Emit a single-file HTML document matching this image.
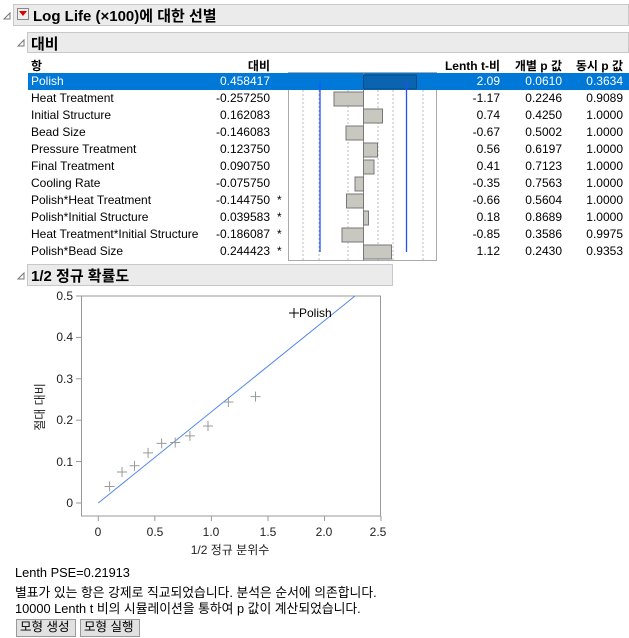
<!DOCTYPE html>
<html><head><meta charset="utf-8"><style>
body{margin:0;width:629px;height:638px;background:#fff;font-family:"Liberation Sans","Noto Sans CJK KR",sans-serif;font-size:12px;color:#000;position:relative;overflow:hidden}
.a{position:absolute;white-space:nowrap}
.hdr{position:absolute;background:#ebebeb;border:1px solid #c8c8c8;box-sizing:border-box}
.r{text-align:right}
.b{font-weight:bold}
.btn{position:absolute;top:619px;height:18px;background:#e1e1e1;border:1px solid #999;box-sizing:border-box;font-size:12.5px;line-height:15px;padding:0 3px}
.ft{font-size:12.8px}
</style></head><body>
<svg class="a" style="left:0;top:0" width="629" height="300">
<path d="M4 19 L10 13 L10 19Z" fill="none" stroke="#777"/>
<path d="M18 46 L24 40 L24 46Z" fill="none" stroke="#777"/>
<path d="M18 279 L24 273 L24 279Z" fill="none" stroke="#777"/>
</svg>
<div class="hdr" style="left:13px;top:4px;width:616px;height:22px"></div>
<div class="a" style="left:17px;top:8px;width:12px;height:12px;border:1px solid #888;background:#eee;box-sizing:border-box"></div>
<svg class="a" style="left:19px;top:11px" width="8" height="6"><path d="M0 0H8L4 5Z" fill="#d00"/></svg>
<div class="a" style="left:33px;top:5px;font-size:15px;font-weight:bold">Log Life (×100)에 대한 선별</div>
<div class="hdr" style="left:27px;top:32px;width:602px;height:21px"></div>
<div class="a" style="left:31px;top:33px;font-size:15px;font-weight:bold">대비</div>
<div class="a b" style="left:31px;top:57px">항</div>
<div class="a r b" style="left:200px;width:70px;top:57px">대비</div>
<div class="a r b" style="left:420px;width:80px;top:57px">Lenth t-비</div>
<div class="a r b" style="left:500px;width:62px;top:57px">개별 p 값</div>
<div class="a r b" style="left:562px;width:61px;top:57px">동시 p 값</div>
<div class="a" style="left:28px;top:73px;width:601px;height:17px;background:#0078d7"></div>
<div class="a" style="left:288px;top:72px;width:149px;height:189px;border:1px solid #aaa;box-sizing:border-box"></div>
<svg class="a" style="left:288px;top:73px" width="150" height="188">
<rect x="0" y="0" width="149" height="17" fill="#0078d7"/>
<g stroke="#bbb" stroke-dasharray="2,2"><line x1="15" y1="17" x2="15" y2="188"/><line x1="31" y1="17" x2="31" y2="188"/><line x1="60" y1="17" x2="60" y2="188"/><line x1="90" y1="17" x2="90" y2="188"/><line x1="105" y1="17" x2="105" y2="188"/><line x1="135" y1="17" x2="135" y2="188"/></g>
<line x1="75.5" y1="0" x2="75.5" y2="188" stroke="#888"/>
<g fill="#c8c8c0" stroke="#777">
<rect x="75.5" y="2" width="53" height="14" fill="#0a64b0" stroke="#0a4a80"/>
<rect x="46" y="19" width="29.5" height="14"/>
<rect x="75.5" y="36" width="19" height="14"/>
<rect x="58" y="53" width="17.5" height="14"/>
<rect x="75.5" y="70" width="14" height="14"/>
<rect x="75.5" y="87" width="10.5" height="14"/>
<rect x="67" y="104" width="8.5" height="14"/>
<rect x="58.5" y="121" width="17" height="14"/>
<rect x="75.5" y="138" width="5" height="14"/>
<rect x="54" y="155" width="21.5" height="14"/>
<rect x="75.5" y="172" width="28" height="14"/>
</g>
<line x1="32" y1="9" x2="32" y2="179" stroke="#2050ff" stroke-width="1.3"/>
<line x1="118.5" y1="9" x2="118.5" y2="179" stroke="#2050ff" stroke-width="1.3"/>
</svg>
<div id="rows"></div>
<script>
var d=[["Polish","0.458417","","2.09","0.0610","0.3634"],["Heat Treatment","-0.257250","","-1.17","0.2246","0.9089"],["Initial Structure","0.162083","","0.74","0.4250","1.0000"],["Bead Size","-0.146083","","-0.67","0.5002","1.0000"],["Pressure Treatment","0.123750","","0.56","0.6197","1.0000"],["Final Treatment","0.090750","","0.41","0.7123","1.0000"],["Cooling Rate","-0.075750","","-0.35","0.7563","1.0000"],["Polish*Heat Treatment","-0.144750","*","-0.66","0.5604","1.0000"],["Polish*Initial Structure","0.039583","*","0.18","0.8689","1.0000"],["Heat Treatment*Initial Structure","-0.186087","*","-0.85","0.3586","0.9975"],["Polish*Bead Size","0.244423","*","1.12","0.2430","0.9353"]];
var h="";d.forEach(function(r,i){var t=74+i*17,c=i==0?"color:#fff;":"";
h+='<div class="a" style="'+c+'left:31px;top:'+t+'px">'+r[0]+'</div><div class="a r" style="'+c+'left:180px;width:90px;top:'+t+'px">'+r[1]+'</div><div class="a" style="left:277px;top:'+t+'px">'+r[2]+'</div><div class="a r" style="'+c+'left:440px;width:60px;top:'+t+'px">'+r[3]+'</div><div class="a r" style="'+c+'left:500px;width:62px;top:'+t+'px">'+r[4]+'</div><div class="a r" style="'+c+'left:562px;width:61px;top:'+t+'px">'+r[5]+'</div>';});
document.getElementById("rows").innerHTML=h;
</script>
<div class="hdr" style="left:27px;top:264px;width:366px;height:22px"></div>
<div class="a" style="left:31px;top:265px;font-size:15px;font-weight:bold">1/2 정규 확률도</div>
<svg class="a" style="left:0;top:286px" width="400" height="275" font-family="Liberation Sans,Noto Sans CJK KR,sans-serif" font-size="12">
<rect x="81.5" y="10" width="299" height="220" fill="#fff" stroke="#999"/>
<g stroke="#999"><line x1="76" y1="10" x2="81" y2="10"/><line x1="76" y1="51.4" x2="81" y2="51.4"/><line x1="76" y1="92.8" x2="81" y2="92.8"/><line x1="76" y1="134.2" x2="81" y2="134.2"/><line x1="76" y1="175.6" x2="81" y2="175.6"/><line x1="76" y1="217" x2="81" y2="217"/>
<line x1="98.3" y1="230" x2="98.3" y2="235"/><line x1="154.8" y1="230" x2="154.8" y2="235"/><line x1="211.4" y1="230" x2="211.4" y2="235"/><line x1="268" y1="230" x2="268" y2="235"/><line x1="324.5" y1="230" x2="324.5" y2="235"/><line x1="381" y1="230" x2="381" y2="235"/></g>
<g text-anchor="end" fill="#222"><text x="73" y="14">0.5</text><text x="73" y="55">0.4</text><text x="73" y="97">0.3</text><text x="73" y="138">0.2</text><text x="73" y="180">0.1</text><text x="73" y="221">0</text></g>
<g text-anchor="middle" fill="#222"><text x="98" y="250">0</text><text x="155" y="250">0.5</text><text x="211" y="250">1.0</text><text x="268" y="250">1.5</text><text x="324" y="250">2.0</text><text x="378" y="250">2.5</text>
<text x="230" y="268">1/2 정규 분위수</text></g>
<text transform="translate(44,121) rotate(-90)" text-anchor="middle" fill="#222">절대 대비</text>
<line x1="98.3" y1="217" x2="355" y2="10" stroke="#5588ee"/>
<g stroke="#999" id="pts"></g>
<path d="M289 27h10M294 22v10" stroke="#000"/>
<text x="299" y="31" fill="#000">Polish</text>
</svg>
<script>
var p=[[0.1,0.04],[0.21,0.075],[0.32,0.09],[0.44,0.121],[0.56,0.144],[0.68,0.146],[0.81,0.162],[0.97,0.186],[1.15,0.244],[1.39,0.257]],s="";
p.forEach(function(q){var x=98.3+q[0]*113.1,y=217-q[1]*414;s+='<path d="M'+(x-5)+' '+y+'h10M'+x+' '+(y-5)+'v10"/>';});
document.getElementById("pts").innerHTML=s;
</script>
<div class="a ft" style="left:15px;top:565px">Lenth PSE=0.21913</div>
<div class="a ft" style="left:15px;top:582px">별표가 있는 항은 강제로 직교되었습니다. 분석은 순서에 의존합니다.</div>
<div class="a ft" style="left:15px;top:598px">10000 Lenth t 비의 시뮬레이션을 통하여 p 값이 계산되었습니다.</div>
<div class="btn" style="left:16px;width:60px">모형 생성</div>
<div class="btn" style="left:80px;width:60px">모형 실행</div>
</body></html>
